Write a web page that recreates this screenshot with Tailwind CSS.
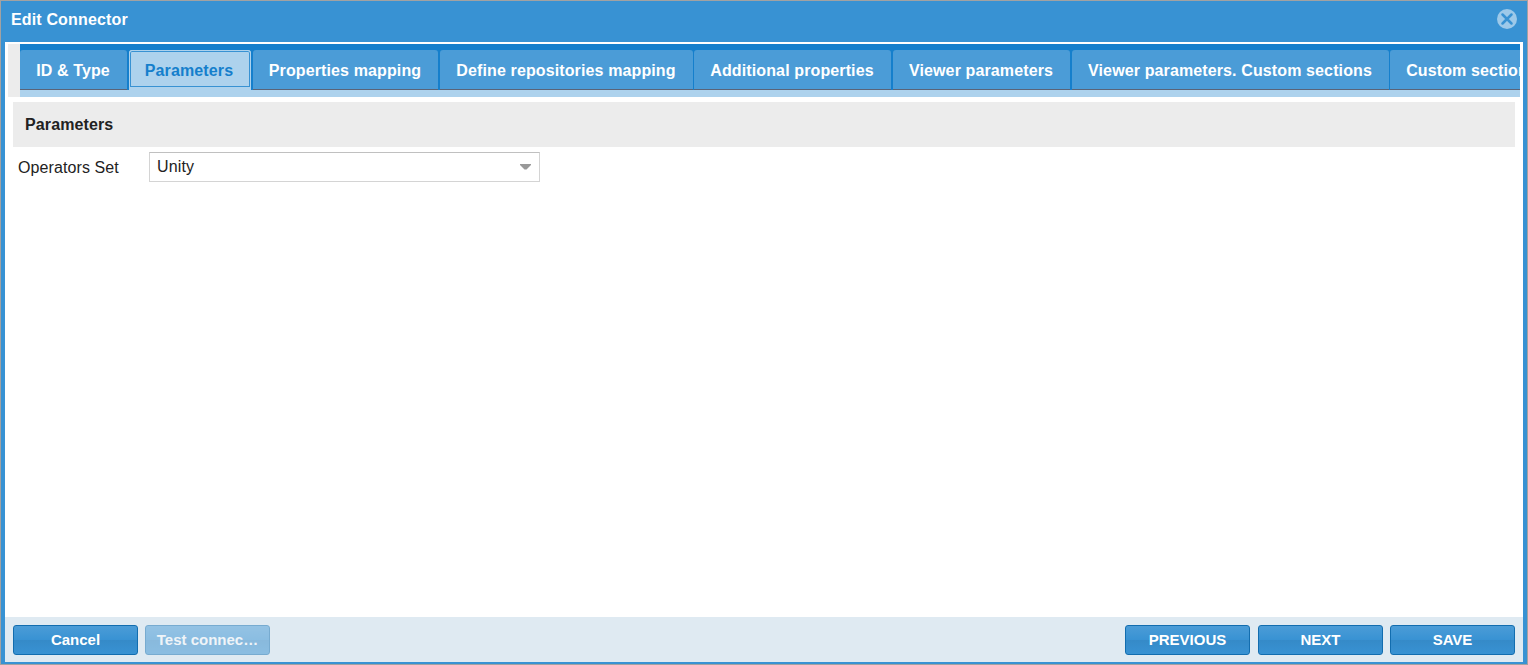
<!DOCTYPE html>
<html lang="en">
<head>
<meta charset="utf-8">
<title>Edit Connector</title>
<script src="https://cdn.jsdelivr.net/npm/@tailwindcss/browser@4"></script>
</head>
<body class="h-[665px] w-[1528px] overflow-hidden font-['Liberation_Sans',Arial,sans-serif]">
<div class="flex h-full w-full flex-col border border-[#a2a2a2] bg-[#3892d3] px-1 pb-[2px]">
  <header class="flex h-[41px] shrink-0 items-start justify-between pl-1.5 pr-1.5">
    <h1 class="mt-[9px] text-[16px] leading-5 font-bold tracking-[0.15px] text-white">Edit Connector</h1>
    <button aria-label="Close" class="mt-[8px]">
      <svg class="block size-5" viewBox="0 0 20 20"><circle cx="10" cy="10" r="10" fill="#9dc9e9"/><path d="M5.5 5.5 14.5 14.5M14.5 5.5 5.5 14.5" stroke="#3892d3" stroke-width="2.5" stroke-linecap="round"/></svg>
    </button>
  </header>
  <main class="flex min-h-0 flex-1 flex-col bg-white pt-[2px]">
    <div class="ml-[3px] mr-[3px] flex h-[53px] shrink-0 bg-[#ececec] pl-3">
      <nav class="flex w-[1500px] flex-col overflow-hidden bg-[#add2ed]">
        <div class="flex h-[46px] w-[1600px] shrink-0 gap-px bg-[#157fcc] pt-1.5 text-[16px] font-bold tracking-[0.12px] text-white *:flex *:shrink-0 *:items-center *:justify-center *:rounded-t-[3px] *:pt-[2px] *:pr-px *:whitespace-nowrap">
          <div class="w-[107px] border-b border-[#5a6478] bg-[#4b9cd7]">ID &amp; Type</div>
          <div class="ml-px w-[122px] bg-[#add2ed] text-[#157fcc]"><span class="-mt-[4px] -mr-px flex h-[38px] w-[122px] shrink-0 items-center justify-center rounded-t-[3px] border border-[#add2ed] pr-0.5 pt-[3px] shadow-[inset_0_0_0_1px_#3892d3]">Parameters</span></div>
          <div class="ml-px w-[185px] border-b border-[#5a6478] bg-[#4b9cd7]">Properties mapping</div>
          <div class="ml-px w-[253px] border-b border-[#5a6478] bg-[#4b9cd7]">Define repositories mapping</div>
          <div class="w-[197px] border-b border-[#5a6478] bg-[#4b9cd7]">Additional properties</div>
          <div class="ml-px w-[177px] border-b border-[#5a6478] bg-[#4b9cd7]">Viewer parameters</div>
          <div class="ml-px w-[317px] border-b border-[#5a6478] bg-[#4b9cd7]">Viewer parameters. Custom sections</div>
          <div class="w-[164px] border-b border-[#5a6478] bg-[#4b9cd7]">Custom sections</div>
        </div>
      </nav>
    </div>
    <h2 class="mx-2 mt-[5px] flex h-[45px] shrink-0 items-center bg-[#ececec] pl-3 text-[16px] font-bold tracking-[0.12px] text-[#222]">Parameters</h2>
    <div class="mt-[5px] flex h-[30px] items-center pl-[13px] text-[16px] text-[#222]">
      <label class="w-[131px] pt-px tracking-[0.1px]">Operators Set</label>
      <div class="flex h-[30px] w-[391px] items-center justify-between border border-[#d4d4d4] border-t-[#c0c0c0] pl-[7px] pr-2">
        <span class="-mt-px tracking-[0.15px]">Unity</span>
        <svg class="block h-[6px] w-[11px]" viewBox="0 0 11 6"><path d="M0 0H11V1L6.5 5.5H4.5L0 1Z" fill="#999"/></svg>
      </div>
    </div>
  </main>
  <footer class="flex h-[45px] shrink-0 bg-[#dfeaf2] px-2 pt-2 text-[15px] font-bold text-white *:flex *:h-[30px] *:w-[125px] *:items-center *:justify-center *:rounded-[3px] *:border *:border-[#126daf] *:bg-linear-[#4b9cd7,#3892d3_50%,#358ac8_51%,#3892d3]">
    <button>Cancel</button>
    <button class="ml-[7px] opacity-50">Test connec…</button>
    <button class="ml-auto">PREVIOUS</button>
    <button class="ml-2">NEXT</button>
    <button class="ml-[7px]">SAVE</button>
  </footer>
</div>
</body>
</html>
